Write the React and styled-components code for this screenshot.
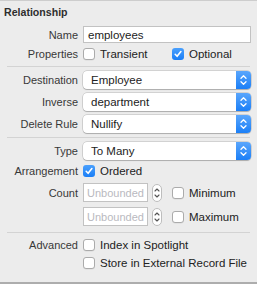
import React from "react";
import styled, { createGlobalStyle } from "styled-components";

const Global = createGlobalStyle`
  html, body { margin: 0; padding: 0; background: #ececec; }
  body { font-family: "Liberation Sans", Arial, sans-serif; }
`;

const Panel = styled.div`
  width: 257px;
  height: 284px;
  box-sizing: border-box;
  background: #ececec;
  border-top: 1px solid #cdcdcd;
  border-bottom: 2px solid #adadad;
  display: flex;
  flex-direction: column;
  overflow: hidden;
`;

const Title = styled.div`
  margin: 4px 0 0 4px;
  height: 14px;
  line-height: 14px;
  font-size: 10.6px;
  font-weight: bold;
  color: #2e2e2e;
`;

const Row = styled.div`
  display: grid;
  grid-template-columns: 78px 168px;
  column-gap: 5px;
  align-items: center;
  height: ${(p) => p.$h || 14}px;
  margin-top: ${(p) => p.$mt || 4}px;
`;

const Label = styled.div`
  text-align: right;
  font-size: 11px;
  color: #383838;
  white-space: nowrap;
`;

const Controls = styled.div`
  display: flex;
  align-items: center;
  height: 100%;
`;

const Separator = styled.div`
  height: 1px;
  background: #d3d3d3;
  margin: ${(p) => p.$mt || 4}px 7px 0 7px;
`;

const TextField = styled.div`
  box-sizing: border-box;
  width: ${(p) => p.$w || 168}px;
  height: 100%;
  background: #fff;
  border: 1px solid #c2c2c2;
  padding-left: ${(p) => p.$pl || 4}px;
  display: flex;
  align-items: center;
  overflow: hidden;
  white-space: nowrap;
  font-size: ${(p) => (p.$placeholder ? 11 : 11.5)}px;
  color: ${(p) => (p.$placeholder ? "#b9b9c0" : "#222")};
  flex: none;
`;

const Popup = styled.div`
  box-sizing: border-box;
  width: 168px;
  height: 18px;
  background: #fff;
  border-radius: 4px;
  box-shadow: 0 0 0 0.5px rgba(0, 0, 0, 0.22), 0 1px 1px rgba(0, 0, 0, 0.18);
  display: flex;
  align-items: center;
  overflow: hidden;
`;

const PopupText = styled.div`
  flex: 1;
  padding-left: 8px;
  font-size: 11.5px;
  color: #222;
`;

const PopupArrows = styled.div`
  width: 15px;
  height: 100%;
  background: linear-gradient(#5aa6fc, #1b7ff7);
  display: flex;
  align-items: center;
  justify-content: center;
`;

const Box = styled.span`
  box-sizing: border-box;
  width: 12px;
  height: 12px;
  border-radius: 3px;
  flex: none;
  display: flex;
  align-items: center;
  justify-content: center;
  background: ${(p) => (p.$checked ? "linear-gradient(#4aa0fd, #1a7ef6)" : "#fff")};
  border: ${(p) => (p.$checked ? "none" : "1px solid #ababab")};
  box-shadow: ${(p) => (p.$checked ? "none" : "0 0.5px 0.5px rgba(0,0,0,0.08)")};
`;

const CheckWrap = styled.div`
  display: flex;
  align-items: center;
  gap: 5px;
  width: ${(p) => (p.$w ? p.$w + "px" : "auto")};
  flex: none;
  font-size: 11.5px;
  color: #222;
  white-space: nowrap;
`;

const Stepper = styled.div`
  box-sizing: border-box;
  width: 10px;
  height: 18px;
  margin: 0 10px 0 4px;
  border: 1px solid #bdbdbd;
  border-radius: 5px;
  background: #fff;
  display: flex;
  align-items: center;
  justify-content: center;
  flex: none;
`;

const Checkbox = ({ checked, label, w }) => (
  <CheckWrap $w={w}>
    <Box $checked={checked}>
      {checked && (
        <svg width="12" height="12" viewBox="0 0 12 12">
          <path d="M3.2 6.3 L5.1 8.3 L8.9 3.6" fill="none" stroke="#fff" strokeWidth="1.6" strokeLinecap="round" strokeLinejoin="round" />
        </svg>
      )}
    </Box>
    {label}
  </CheckWrap>
);

const PopupButton = ({ value }) => (
  <Popup>
    <PopupText>{value}</PopupText>
    <PopupArrows>
      <svg width="15" height="18" viewBox="0 0 15 18">
        <path d="M5 7.3 L7.5 4.8 L10 7.3 M5 10.7 L7.5 13.2 L10 10.7" fill="none" stroke="#fff" strokeWidth="1.3" strokeLinecap="round" strokeLinejoin="round" />
      </svg>
    </PopupArrows>
  </Popup>
);

const StepperControl = () => (
  <Stepper>
    <svg width="8" height="16" viewBox="0 0 8 16">
      <path d="M2 6 L4 4 L6 6 M2 10 L4 12 L6 10" fill="none" stroke="#555" strokeWidth="1.1" strokeLinecap="round" strokeLinejoin="round" />
    </svg>
  </Stepper>
);

export default function App() {
  return (
    <>
      <Global />
      <Panel>
        <Title>Relationship</Title>
        <Row $h={17} $mt={7}>
          <Label>Name</Label>
          <TextField>employees</TextField>
        </Row>
        <Row $mt={4}>
          <Label>Properties</Label>
          <Controls>
            <Checkbox label="Transient" w={89} />
            <Checkbox label="Optional" checked />
          </Controls>
        </Row>
        <Separator $mt={5} />
        <Row $h={18} $mt={4}>
          <Label>Destination</Label>
          <PopupButton value="Employee" />
        </Row>
        <Row $h={18} $mt={4}>
          <Label>Inverse</Label>
          <PopupButton value="department" />
        </Row>
        <Row $h={18} $mt={4}>
          <Label>Delete Rule</Label>
          <PopupButton value="Nullify" />
        </Row>
        <Separator $mt={4} />
        <Row $h={18} $mt={4}>
          <Label>Type</Label>
          <PopupButton value="To Many" />
        </Row>
        <Row $mt={4}>
          <Label>Arrangement</Label>
          <Controls>
            <Checkbox label="Ordered" checked />
          </Controls>
        </Row>
        <Row $h={19} $mt={5}>
          <Label>Count</Label>
          <Controls>
            <TextField $w={65} $pl={3} $placeholder>Unbounded</TextField>
            <StepperControl />
            <Checkbox label="Minimum" />
          </Controls>
        </Row>
        <Row $h={19} $mt={5}>
          <Label />
          <Controls>
            <TextField $w={65} $pl={3} $placeholder>Unbounded</TextField>
            <StepperControl />
            <Checkbox label="Maximum" />
          </Controls>
        </Row>
        <Separator $mt={6} />
        <Row $mt={5}>
          <Label>Advanced</Label>
          <Controls>
            <Checkbox label="Index in Spotlight" />
          </Controls>
        </Row>
        <Row $mt={4}>
          <Label />
          <Controls>
            <Checkbox label="Store in External Record File" />
          </Controls>
        </Row>
      </Panel>
    </>
  );
}
